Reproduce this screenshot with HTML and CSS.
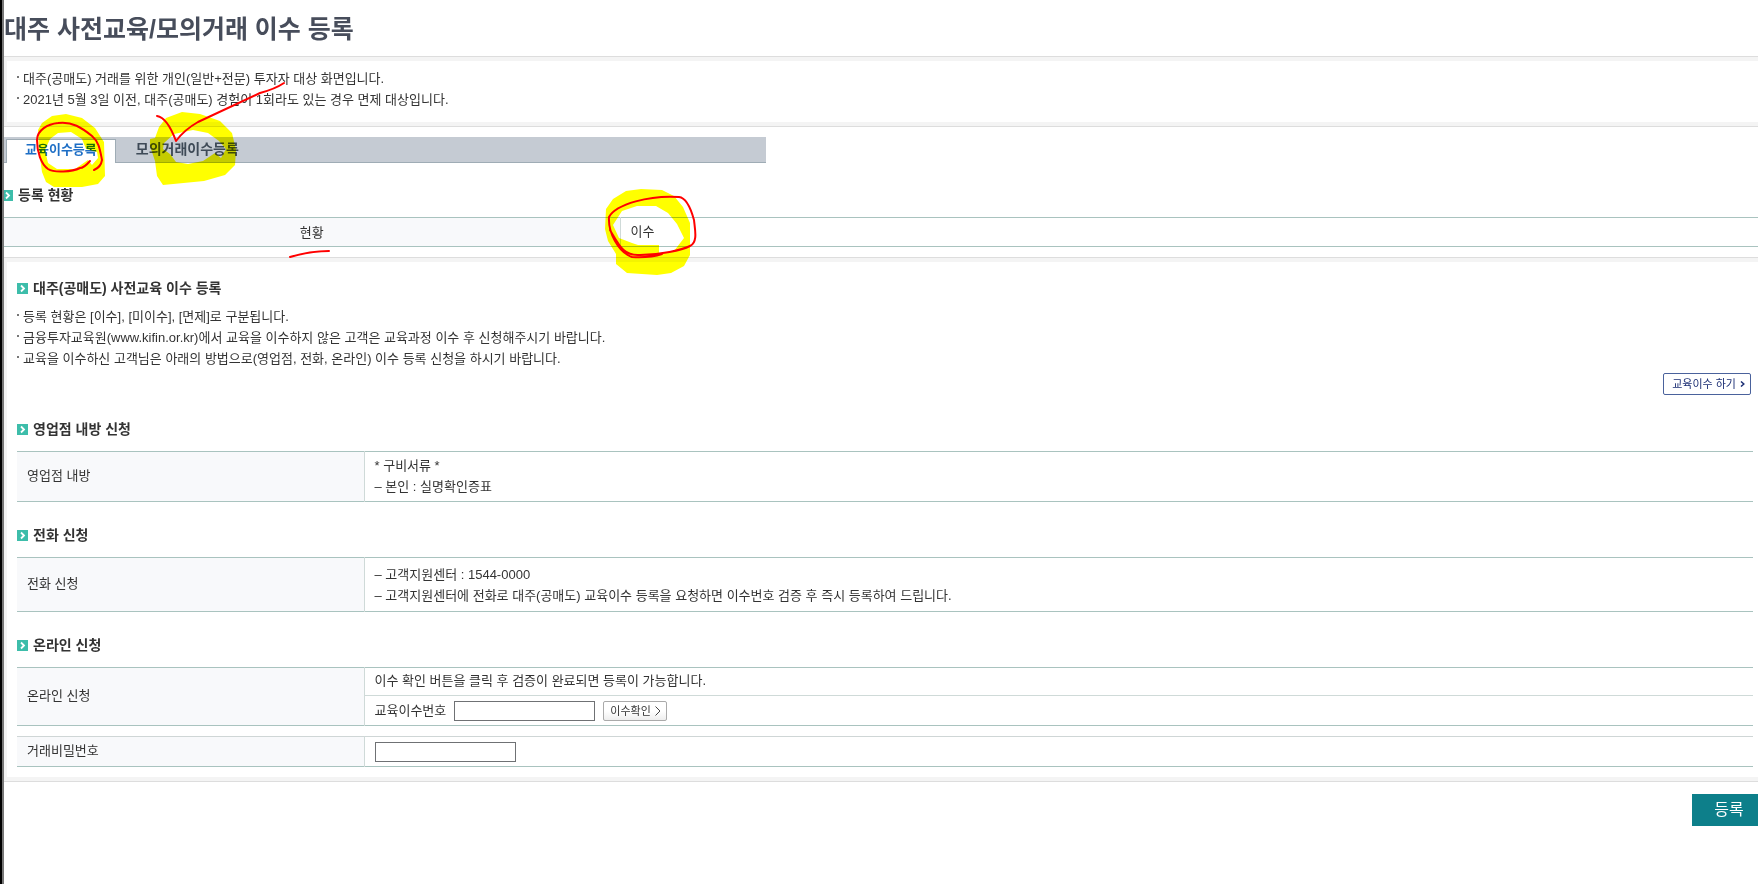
FILE: index.html
```html
<!DOCTYPE html>
<html lang="ko">
<head>
<meta charset="utf-8">
<title>대주 사전교육/모의거래 이수 등록</title>
<link rel="stylesheet" href="styles.css">
</head>
<body>
<svg class="defs" width="0" height="0" aria-hidden="true">
  <symbol id="arrow" viewBox="0 0 11 11"><rect width="11" height="11" fill="#3dbdaa"/><path d="M4 2.5 7 5.5 4 8.5" fill="none" stroke="#fff" stroke-width="1.8"/></symbol>
</svg>
<main class="page">
  <h1 class="title">대주 사전교육/모의거래 이수 등록</h1>

  <section class="panel intro">
    <ul class="notes">
      <li>대주(공매도) 거래를 위한 개인(일반+전문) 투자자 대상 화면입니다.</li>
      <li>2021년 5월 3일 이전, 대주(공매도) 경험이 1회라도 있는 경우 면제 대상입니다.</li>
    </ul>
  </section>

  <nav class="tabs">
    <a class="tab active" href="#edu">교육이수등록</a>
    <a class="tab" href="#mock">모의거래이수등록</a>
  </nav>

  <section class="status">
    <h2 class="heading flush"><svg class="mark"><use href="#arrow"/></svg>등록 현황</h2>
    <table class="grid status-grid">
      <tr><th scope="row">현황</th><td>이수</td></tr>
    </table>
  </section>

  <section class="panel detail" id="edu">
    <h2 class="heading first"><svg class="mark"><use href="#arrow"/></svg>대주(공매도) 사전교육 이수 등록</h2>
    <ul class="notes">
      <li>등록 현황은 [이수], [미이수], [면제]로 구분됩니다.</li>
      <li>금융투자교육원(www.kifin.or.kr)에서 교육을 이수하지 않은 고객은 교육과정 이수 후 신청해주시기 바랍니다.</li>
      <li>교육을 이수하신 고객님은 아래의 방법으로(영업점, 전화, 온라인) 이수 등록 신청을 하시기 바랍니다.</li>
    </ul>
    <div class="go-row">
      <button class="go" type="button">교육이수 하기<svg width="5" height="6" viewBox="0 0 5 6"><path d="M1 .5 3.8 3 1 5.500" fill="none" stroke="#1c2f74" stroke-width="1.500"/></svg></button>
    </div>

    <h2 class="heading"><svg class="mark"><use href="#arrow"/></svg>영업점 내방 신청</h2>
    <table class="grid">
      <tr><th scope="row">영업점 내방</th><td class="lines">* 구비서류 *<br>– 본인 : 실명확인증표</td></tr>
    </table>

    <h2 class="heading"><svg class="mark"><use href="#arrow"/></svg>전화 신청</h2>
    <table class="grid">
      <tr><th scope="row">전화 신청</th><td class="lines roomy">– 고객지원센터 : 1544-0000<br>– 고객지원센터에 전화로 대주(공매도) 교육이수 등록을 요청하면 이수번호 검증 후 즉시 등록하여 드립니다.</td></tr>
    </table>

    <h2 class="heading"><svg class="mark"><use href="#arrow"/></svg>온라인 신청</h2>
    <table class="grid">
      <tr><th scope="row" rowspan="2">온라인 신청</th><td class="guide">이수 확인 버튼을 클릭 후 검증이 완료되면 등록이 가능합니다.</td></tr>
      <tr><td class="entry"><div class="field"><label for="cert">교육이수번호</label><input id="cert" type="text"><button class="check" type="button">이수확인<svg width="6" height="10" viewBox="0 0 6 10"><path d="M.5.5 5 5 .5 9.500" fill="none" stroke="#444"/></svg></button></div></td></tr>
    </table>
    <table class="grid password">
      <tr><th scope="row"><label for="pw">거래비밀번호</label></th><td class="entry"><div class="field"><input id="pw" type="password"></div></td></tr>
    </table>
  </section>

  <div class="actions"><button class="submit" type="submit">등록</button></div>
</main>

<svg class="ink marker" width="720" height="290" viewBox="0 0 720 290" aria-hidden="true">
  <g fill="#ff0" fill-rule="evenodd">
    <path d="M42 123 52 116 66 114 82 118 95 128 104 142 105 176 98 184 82 187 54 187 46 182 42 172 39 150 38 130ZM50 139 45 150 48 163 57 169 75 169 88 160 92 165 98 158 97 152 86 149 82 139 71 132 58 133Z"/>
    <path d="M159 127 166 118 182 112 200 114 220 121 232 133 236 150 235 165 225 175 204 181 163 185 157 176 155 161 150 146 150 139 155 138ZM174 134 164 143 163 149 170 154 176 162 188 164 203 161 215 153 221 158 226 149 219 141 208 133 193 130Z"/>
    <path d="M606 209 613 199 626 191 641 189 662 190 674 196 683 207 690 223 690 255 684 266 671 273 657 275 627 273 616 264 616 254 608 241 605 229ZM622 211 613 225 619 238 632 243 638 245 659 245 659 253 674 251 684 238 677 224 668 213 656 206 637 206Z"/>
  </g>
</svg>
<svg class="ink" width="720" height="290" viewBox="0 0 720 290" aria-hidden="true">
  <g fill="none" stroke="#f00" stroke-width="2" stroke-linecap="round" stroke-linejoin="round">
    <path d="M90 161Q84 168 80 168C72 172 54 173 48 169C41 164 37 152 37 140C37 130 48 124 58 123C72 121 82 128 92 136C99 142 100 150 102 160Q101 167 94 170"/>
    <path d="M157 116C164 117 170 125 176 141Q184 130 198 122L260 93Q275 89 284 83"/>
    <path d="M290 257Q310 251 329 251"/>
    <path d="M610 230C620 247 624 256 640 255C660 255 682 250 690 246C698 242 695 230 694 220Q688 198 679 197C650 195 616 204 609 217C608 232 618 252 632 257Q650 258 662 254"/>
  </g>
</svg>
</body>
</html>
```
FILE: styles.css
```css
* { box-sizing: border-box; }
body {
  margin: 0;
  position: relative;
  background: #fff;
  color: #333;
  font: 13px/21px "Liberation Sans", "Noto Sans CJK KR", sans-serif;
}
.defs, .ink { position: absolute; top: 0; left: 0; pointer-events: none; }
.marker { mix-blend-mode: multiply; }
.page {
  min-height: 100vh;
  border-left: 2px solid #000;
  box-shadow: inset 2px 0 #777;
  padding-left: 2px;
}
.title {
  margin: 0;
  height: 56px;
  font-size: 25px;
  line-height: 58px;
  color: #474d5b;
  white-space: nowrap;
}
.panel {
  border: 4px solid #f4f4f4;
  border-left-width: 3px;
  border-right: 0;
  box-shadow: 0 -1px #ddd, 0 1px #ddd;
}
.intro { margin-top: 1px; padding: 7px 10px 12px; }
.notes { margin: 0; padding: 0; list-style: none; }
.notes li { display: flex; align-items: center; gap: 4px; }
.notes li::before { content: ""; width: 2px; height: 2px; margin-bottom: 3px; background: #777; flex: none; }

.tabs {
  display: flex;
  align-items: flex-end;
  max-width: 762px;
  height: 26px;
  margin-top: 11px;
  padding-left: 2px;
  background: #c5cbd3;
  box-shadow: inset 0 -1px #9facb5;
}
.tab {
  height: 24px;
  padding: 0 20px;
  font-size: 14px;
  line-height: 20px;
  font-weight: bold;
  color: #3e4a57;
  text-decoration: none;
}
.tab.active {
  border: 1px solid #9facb5;
  border-bottom: 0;
  background: #fff;
  color: #1d6ec5;
  padding: 0 18px;
  font-size: 13px;
}

.heading {
  display: flex;
  align-items: center;
  gap: 5px;
  height: 21px;
  margin: 23px 0 11px;
  font-size: 14px;
  line-height: 21px;
}
.mark { width: 11px; height: 11px; flex: none; }
.status { padding-bottom: 10px; overflow: hidden; }
.heading.flush { margin: 22px 0 11px -2px; }
.heading.first { margin: 0 0 7px; }

.grid {
  width: 100%;
  border-collapse: collapse;
  table-layout: fixed;
  border-top: 1px solid #a9c3bf;
  border-bottom: 1px solid #a9c3bf;
}
.grid th {
  width: 347px;
  padding: 0 10px 3px;
  background: #f8f9fb;
  font-weight: normal;
  text-align: left;
}
.grid td { padding: 3px 10px 4px; border-left: 1px solid #cfdad8; }
.grid.status-grid th { width: 616px; padding: 0 10px; text-align: center; }
.grid .lines { padding: 3px 10px 4px; }
.grid .roomy { padding: 6px 10px 5px; }
.grid .guide { padding: 2px 10px 4px; border-bottom: 1px solid #cfdad8; }
.grid .entry { padding: 5px 10px 4px; }
.password { margin-top: 10px; border-top-color: #cfd6d6; }

.detail { margin-top: 1px; padding: 16px 5px 10px 10px; }
.go-row { display: flex; justify-content: flex-end; margin: 4px 2px 24px 0; }
.go {
  display: flex;
  align-items: center;
  gap: 4px;
  height: 22px;
  padding: 0 5px 0 8px;
  border: 1px solid #4a629c;
  border-radius: 2px;
  background: #fff;
  color: #1c2f74;
  font: 11px/18px "Liberation Sans", "Noto Sans CJK KR", sans-serif;
}
.field { display: flex; align-items: center; gap: 8px; }
.field label { line-height: 20px; }
.field input {
  width: 141px;
  height: 20px;
  padding: 0 3px;
  border: 1px solid #6f7174;
  background: #fff;
  font: inherit;
}
.check {
  display: flex;
  align-items: center;
  gap: 4px;
  height: 20px;
  padding: 0 5px 0 6px;
  border: 1px solid #aaa;
  border-radius: 2px;
  background: linear-gradient(#fff 50%, #eee);
  color: #333;
  font: 11px/16px "Liberation Sans", "Noto Sans CJK KR", sans-serif;
}
.actions { display: flex; justify-content: flex-end; padding-top: 13px; }
.submit {
  width: 66px;
  height: 32px;
  padding: 0 0 0 8px;
  border: 0;
  background: #0d7f8a;
  color: #fff;
  font: 16px/32px "Liberation Sans", "Noto Sans CJK KR", sans-serif;
}
```
